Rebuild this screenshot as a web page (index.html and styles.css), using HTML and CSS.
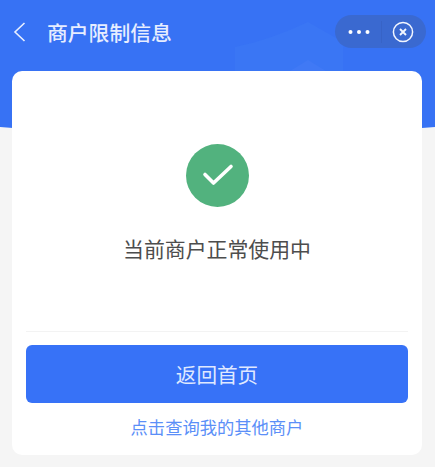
FILE: index.html
```html
<!DOCTYPE html>
<html lang="zh-CN">
<head>
  <meta charset="UTF-8">
  <meta name="viewport" content="width=device-width, initial-scale=1.0">
  <title>商户限制信息</title>
  <link rel="stylesheet" href="styles.css">
</head>
<body>
<header class="hero">
  <svg class="hero-bg" width="435" height="140" viewBox="0 0 435 140">
    <path d="M0 127 Q217 146 435 127 V0 H0 Z" fill="#3772f4"/>
    <path d="M235 47 Q270 40 308 22 L343 42 V71 H235 Z" fill="#3a76f4"/>
    <path d="M290 71 L308 60 L326 71 Z" fill="#4079f5"/>
  </svg>
  <nav class="nav">
    <svg class="back" width="13" height="20" viewBox="0 0 13 20">
      <path d="M11.5 1 L2 10 L11.5 19" fill="none" stroke="#e8efff" stroke-width="1.6"/>
    </svg>
    <h1 class="title">商户限制信息</h1>
    <div class="capsule">
      <svg class="more" width="22" height="6" viewBox="0 0 22 6">
        <circle cx="2.5" cy="3" r="2" fill="#fff"/>
        <circle cx="11" cy="3" r="2" fill="#fff"/>
        <circle cx="19.5" cy="3" r="2" fill="#fff"/>
      </svg>
      <span class="capsule-line"></span>
      <svg class="close" width="22" height="22" viewBox="0 0 22 22">
        <circle cx="11" cy="11" r="9.6" fill="none" stroke="#f2f6ff" stroke-width="1.5"/>
        <path d="M8 8 L14 14 M14 8 L8 14" stroke="#f2f6ff" stroke-width="1.9"/>
      </svg>
    </div>
  </nav>
</header>

<main class="card">
  <svg class="status-icon" width="63" height="63" viewBox="0 0 63 63">
    <circle cx="31.5" cy="31.5" r="31.5" fill="#52b27e"/>
    <path d="M19 30.5 L27.5 39 L45 22.5" fill="none" stroke="#fff" stroke-width="3.6" stroke-linecap="round" stroke-linejoin="round"/>
  </svg>
  <p class="status-text">当前商户正常使用中</p>
  <div class="actions">
    <button class="btn-home">返回首页</button>
    <a class="link-other">点击查询我的其他商户</a>
  </div>
</main>
</body>
</html>
```

FILE: styles.css
```css
* {
  box-sizing: border-box;
}

body {
  margin: 0;
  background-color: #f5f5f5;
  font-family: "Noto Sans CJK SC", "Liberation Sans", sans-serif;
}

.hero {
  position: relative;
  height: 71px;
}

.hero-bg {
  position: absolute;
  top: 0;
  left: 0;
}

.nav {
  position: relative;
  display: flex;
  align-items: center;
  height: 48px;
  padding: 15px 9px 0 13px;
}

.title {
  margin: 0 0 0 21px;
  font-size: 20.8px;
  font-weight: 500;
  color: #e6edff;
}

.capsule {
  display: flex;
  align-items: center;
  width: 91px;
  height: 33px;
  margin-left: auto;
  padding-left: 13px;
  border-radius: 17px;
  background-color: #3a69d0;
}

.capsule-line {
  width: 1px;
  height: 22px;
  margin: 0 10px 0 11px;
  background-color: #3763c6;
}

.card {
  position: relative;
  display: flex;
  flex-direction: column;
  align-items: center;
  width: 410px;
  height: 384px;
  margin-left: 12px;
  padding: 73px 14px 0;
  background-color: #fff;
  border-radius: 10px;
}

.status-icon {
  flex-shrink: 0;
}

.status-text {
  margin: 26px 0 0;
  font-size: 20.9px;
  line-height: 30px;
  color: #4d4d4d;
}

.actions {
  display: flex;
  flex-direction: column;
  align-items: center;
  width: 382px;
  margin-top: 68px;
  padding-top: 13px;
  border-top: 1px solid #f3f3f3;
}

.btn-home {
  width: 100%;
  height: 58px;
  border: none;
  border-radius: 6px;
  background-color: #3772f7;
  font-family: inherit;
  font-size: 20.6px;
  color: #dfe8ff;
}

.link-other {
  margin-top: 10px;
  font-size: 17.3px;
  line-height: 28px;
  color: #5b8ff8;
}
```
